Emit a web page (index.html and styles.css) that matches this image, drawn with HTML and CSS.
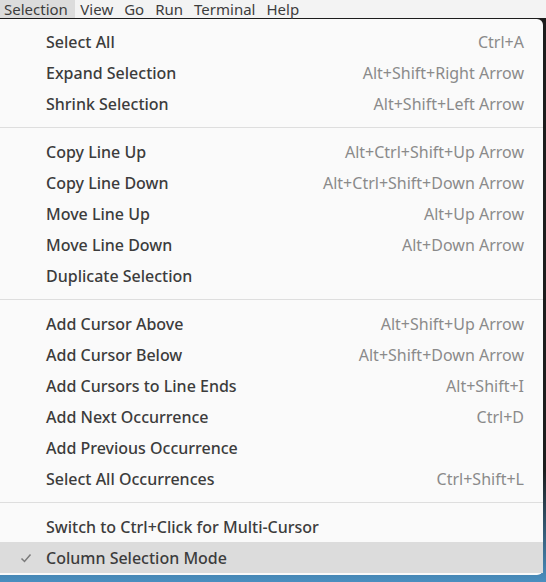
FILE: index.html
```html
<!DOCTYPE html>
<html>
<head>
<meta charset="utf-8">
<link rel="stylesheet" href="styles.css">
</head>
<body>
<div class="menubar">
  <span class="mb-item active">Selection</span>
  <span class="mb-item">View</span>
  <span class="mb-item">Go</span>
  <span class="mb-item">Run</span>
  <span class="mb-item">Terminal</span>
  <span class="mb-item">Help</span>
</div>
<div class="stage">
  <div class="menu">
    <div class="row"><span class="check"></span><span class="label">Select All</span><span class="key">Ctrl+A</span></div>
    <div class="row"><span class="check"></span><span class="label">Expand Selection</span><span class="key">Alt+Shift+Right Arrow</span></div>
    <div class="row"><span class="check"></span><span class="label">Shrink Selection</span><span class="key">Alt+Shift+Left Arrow</span></div>
    <div class="sep"></div>
    <div class="row"><span class="check"></span><span class="label">Copy Line Up</span><span class="key">Alt+Ctrl+Shift+Up Arrow</span></div>
    <div class="row"><span class="check"></span><span class="label">Copy Line Down</span><span class="key">Alt+Ctrl+Shift+Down Arrow</span></div>
    <div class="row"><span class="check"></span><span class="label">Move Line Up</span><span class="key">Alt+Up Arrow</span></div>
    <div class="row"><span class="check"></span><span class="label">Move Line Down</span><span class="key">Alt+Down Arrow</span></div>
    <div class="row"><span class="check"></span><span class="label">Duplicate Selection</span><span class="key"></span></div>
    <div class="sep"></div>
    <div class="row"><span class="check"></span><span class="label">Add Cursor Above</span><span class="key">Alt+Shift+Up Arrow</span></div>
    <div class="row"><span class="check"></span><span class="label">Add Cursor Below</span><span class="key">Alt+Shift+Down Arrow</span></div>
    <div class="row"><span class="check"></span><span class="label">Add Cursors to Line Ends</span><span class="key">Alt+Shift+I</span></div>
    <div class="row"><span class="check"></span><span class="label">Add Next Occurrence</span><span class="key">Ctrl+D</span></div>
    <div class="row"><span class="check"></span><span class="label">Add Previous Occurrence</span><span class="key"></span></div>
    <div class="row"><span class="check"></span><span class="label">Select All Occurrences</span><span class="key">Ctrl+Shift+L</span></div>
    <div class="sep"></div>
    <div class="row"><span class="check"></span><span class="label">Switch to Ctrl+Click for Multi-Cursor</span><span class="key"></span></div>
    <div class="row hover"><span class="check"><svg width="14" height="14" viewBox="0 0 14 14"><path d="M2.5 7.5 L5.5 10.5 L11.5 3.5" fill="none" stroke="#7a7a7a" stroke-width="1.5"/></svg></span><span class="label">Column Selection Mode</span><span class="key"></span></div>
  </div>
</div>
</body>
</html>
```
FILE: styles.css
```css
html, body {
  margin: 0;
  padding: 0;
}
body {
  width: 546px;
  height: 582px;
  overflow: hidden;
  background: #fbfbfb;
  font-family: "Noto Sans", "DejaVu Sans", sans-serif;
}
.menubar {
  display: flex;
  height: 18px;
  background: #f3f3f3;
  color: #3d3d3d;
  font-size: 15px;
  line-height: 18px;
}
.mb-item {
  padding: 0 5.5px;
}
.mb-item.active {
  background: #dcdcdc;
  padding: 0 7px 0 4px;
}
.stage {
  display: flex;
  background: linear-gradient(#1c1c1c 0, #1c1c1c 80%, #4a8fc0 100%);
  padding-top: 1px;
  height: 563px;
}
.menu {
  width: 543px;
  height: 556px;
  background: #fafafa;
  border-radius: 0 6px 6px 0;
  padding-top: 7px;
  box-sizing: border-box;
}
.row {
  display: flex;
  align-items: center;
  height: 31px;
  padding-right: 19px;
  font-size: 16px;
}
.row.hover {
  background: #dcdcdc;
}
.check {
  width: 46px;
  display: flex;
  justify-content: center;
  padding-left: 6px;
  box-sizing: border-box;
  height: 14px;
}
.label {
  flex: 1;
  color: #3c3c3c;
  font-weight: 500;
}
.key {
  color: #8a8a8a;
}
.sep {
  height: 1px;
  background: #dedede;
  margin: 8px 0;
}
```
